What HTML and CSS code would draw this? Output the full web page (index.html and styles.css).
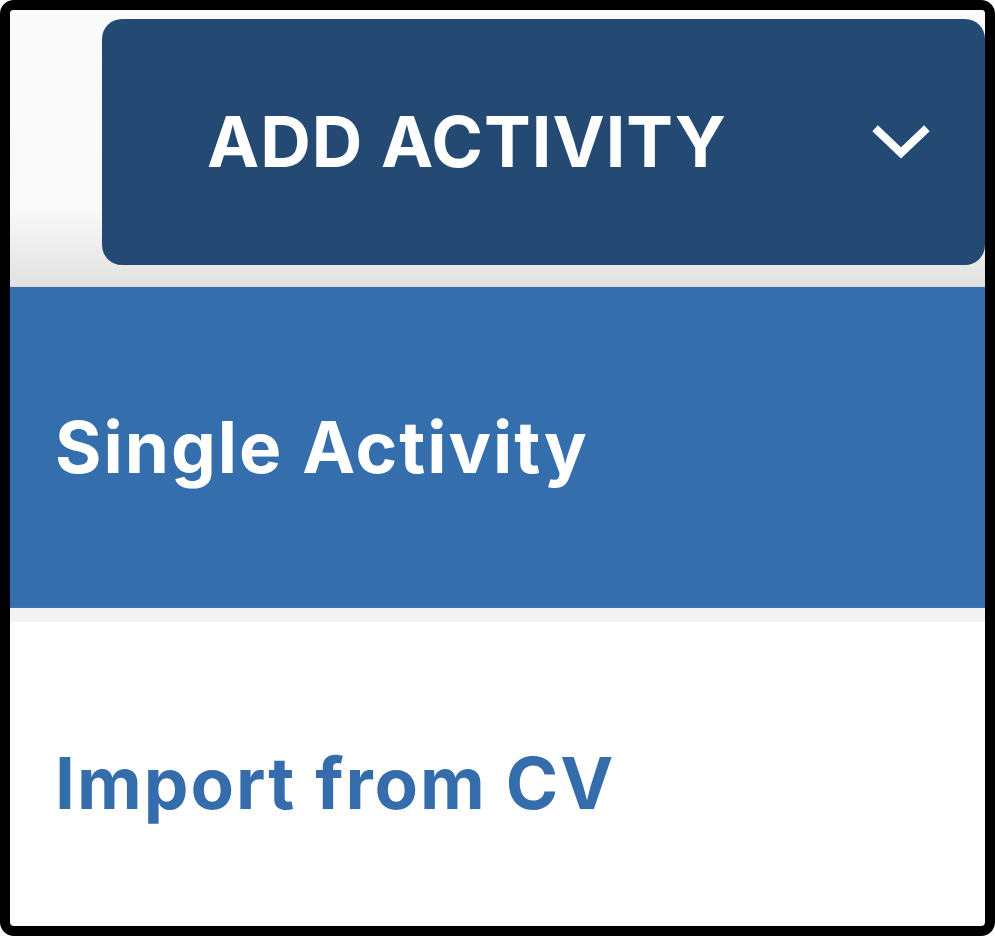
FILE: index.html
```html
<!DOCTYPE html>
<html lang="en">
<head>
    <meta charset="UTF-8">
    <title>Add Activity</title>
    <link rel="stylesheet" href="styles.css">
</head>
<body>
    <div class="frame">
        <div class="toolbar">
            <button class="add-btn" id="addBtn">
                <span class="add-label">ADD ACTIVITY</span>
                <svg class="chevron" width="60" height="40" viewBox="0 0 60 40">
                    <polyline points="6,9 29,31 52,9" fill="none" stroke="#fff" stroke-width="8" stroke-linecap="square"/>
                </svg>
            </button>
        </div>
        <div class="menu">
            <a class="menu-item active" href="#">Single Activity</a>
            <div class="menu-gap"></div>
            <a class="menu-item" href="#">Import from CV</a>
        </div>
    </div>
</body>
</html>
```

FILE: styles.css
```css
body {
    margin: 0;
    background: #fff;
    font-family: Inter, "Liberation Sans", sans-serif;
}

.frame {
    height: 936px;
    box-sizing: border-box;
    border: 10px solid #000;
    border-radius: 14px;
    overflow: hidden;
    display: flex;
    flex-direction: column;
    background: #fff;
}

.toolbar {
    height: 277px;
    box-sizing: border-box;
    padding: 9px 0 0 92px;
    background: linear-gradient(#fafafa 0%, #f9f9f9 72%, #e2e2e2 100%);
    border-bottom: 1px solid #d8d8d8;
}

.add-btn {
    width: 100%;
    height: 246px;
    display: flex;
    align-items: center;
    justify-content: space-between;
    padding: 0 53px 0 105px;
    box-sizing: border-box;
    background: #244a74;
    border: none;
    border-radius: 20px;
    color: #fff;
    cursor: pointer;
}

.add-label {
    font-family: Inter, "Liberation Sans", sans-serif;
    font-size: 70px;
    font-weight: 700;
    letter-spacing: 1px;
    line-height: 1;
}

.chevron {
    display: block;
}

.menu {
    flex: 1;
    display: flex;
    flex-direction: column;
}

.menu-item {
    display: flex;
    align-items: center;
    padding-left: 45px;
    font-size: 71px;
    font-weight: 700;
    letter-spacing: 2px;
    color: #356cab;
    text-decoration: none;
    height: 304px;
    box-sizing: border-box;
    padding-top: 18px;
}

.menu-item.active {
    height: 321px;
    padding-top: 0;
    background: #356ead;
    color: #fff;
    border-bottom: 2px solid #3a72b2;
}

.menu-gap {
    height: 14px;
    background: #f2f2f2;
}
```
